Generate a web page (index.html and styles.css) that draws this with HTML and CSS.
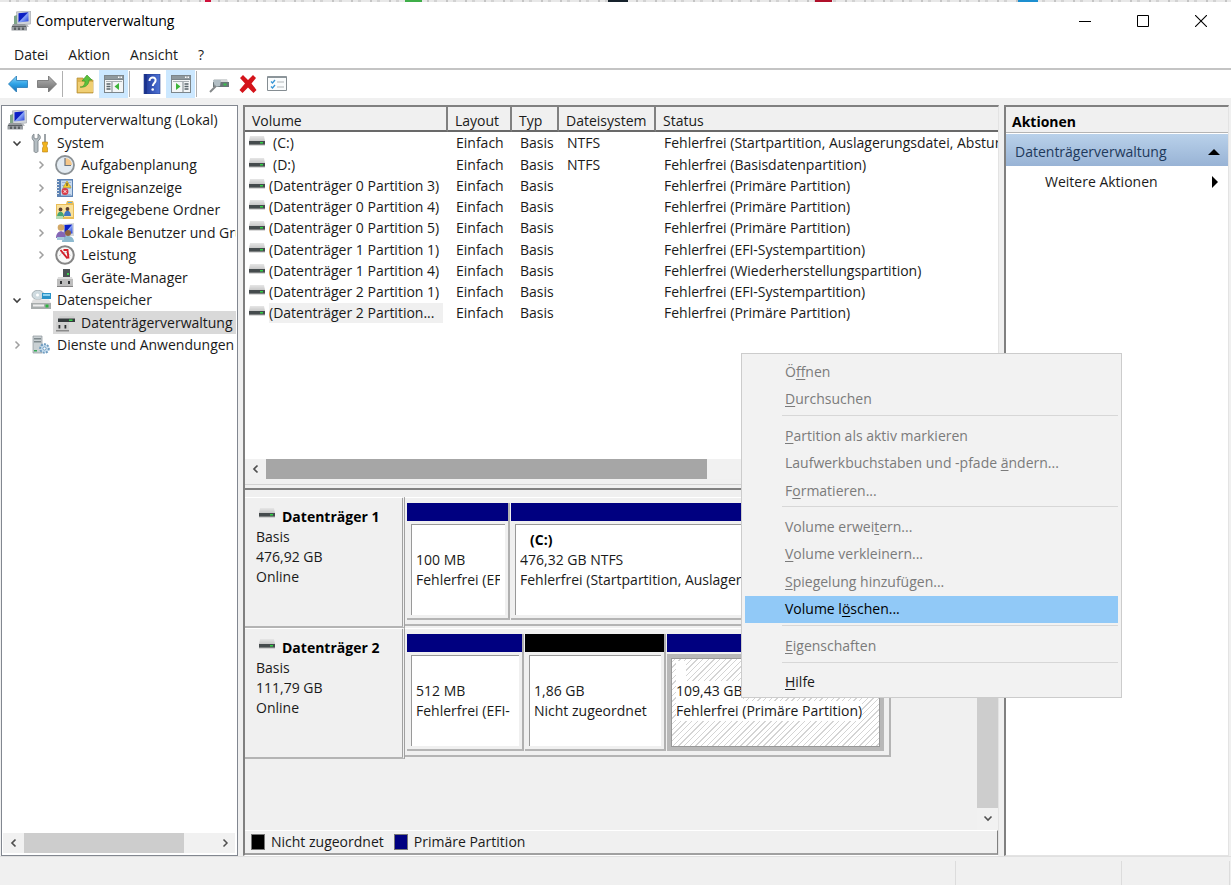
FILE: index.html
```html
<!DOCTYPE html>
<html lang="de">
<head>
<meta charset="utf-8">
<title>Computerverwaltung</title>
<link rel="stylesheet" href="styles.css">
</head>
<body>
<svg class="defs" aria-hidden="true">
  <defs>
    <linearGradient id="gBlue" x1="0" y1="0" x2="1" y2="1"><stop offset="0" stop-color="#0a1fd0"/><stop offset=".45" stop-color="#0d1fc0"/><stop offset=".52" stop-color="#8aa6f8"/><stop offset="1" stop-color="#1b35d8"/></linearGradient>
    <linearGradient id="gArrow" x1="0" y1="0" x2="0" y2="1"><stop offset="0" stop-color="#8fd6f8"/><stop offset=".5" stop-color="#2fa3e6"/><stop offset="1" stop-color="#1470b8"/></linearGradient>
    <linearGradient id="gGrey" x1="0" y1="0" x2="0" y2="1"><stop offset="0" stop-color="#b5b5b5"/><stop offset="1" stop-color="#6c6c6c"/></linearGradient>
    <linearGradient id="gTop" x1="0" y1="0" x2="0" y2="1"><stop offset="0" stop-color="#e6e6e6"/><stop offset="1" stop-color="#c8c8c8"/></linearGradient>
    <linearGradient id="gHelp" x1="0" y1="0" x2="1" y2="0"><stop offset="0" stop-color="#1c3596"/><stop offset="1" stop-color="#4f74d6"/></linearGradient>
  </defs>
  <symbol id="disk" viewBox="0 0 16 10"><path d="M1 0h14l1 5H0z" fill="url(#gTop)"/><path d="M0 5h16v4H0z" fill="#454b4d"/><path d="M0 8.500h16v1H0z" fill="#b5b5b5"/><path d="M11 6h3v1.500h-3z" fill="#2fd044"/></symbol>
  <symbol id="computer" viewBox="0 0 20 20"><path d="M5.500.8L19.500 0v13L6 14z" fill="#d0d4d9" stroke="#9da1a7" stroke-width=".6"/><path d="M7.500 2.200l10-.9v9l-10 1.200z" fill="url(#gBlue)"/><path d="M3 5l3-1v9H3z" fill="#7fa588"/><path d="M9 13h7l2 3H8z" fill="#b9bcc0"/><path d="M2 13h12l2 3v3.500H.5V16z" fill="#989ca0"/><path d="M1 15h14v1H1zM3 16.500h2V19H3zM7 16.500h2V19H7zM11 16.500h2V19h-2z" fill="#5b6064"/></symbol>
  <symbol id="tools" viewBox="0 0 20 20"><path d="M3 1v4l2 1 2-1V1c2 1 3 3 2 5l-2 2v10c0 2-4 2-4 0V8C0 6 1 2 3 1z" fill="#b4bdc2" stroke="#777f84" stroke-width=".8"/><path d="M13 1h2v9h-2z" fill="#9da3a7"/><path d="M11.500 9h5v2l-1 2 1 2v4h-5v-4l1-2-1-2z" fill="#f1b41e" stroke="#bb7d0b" stroke-width=".6"/></symbol>
  <symbol id="clock" viewBox="0 0 20 20"><circle cx="10" cy="10" r="9" fill="#e3ebf2" stroke="#8b9195" stroke-width="1.800"/><path d="M10 10V3a7 7 0 0 1 7 7z" fill="#f5c78a"/><path d="M10 3v7.500h6" fill="none" stroke="#6b7683" stroke-width="1.200"/></symbol>
  <symbol id="events" viewBox="0 0 20 20"><path d="M2 1h16v18H2z" fill="#5d83b4"/><path d="M6 2.500h11v15H6z" fill="#c8daee"/><path d="M7 4h9v1H7zM7 7h9v1H7zM7 10h9v1H7zM7 16h9v1H7z" fill="#9db4d4"/><path d="M1 3h3v1H1zM1 6h3v1H1zM1 9h3v1H1zM1 12h3v1H1zM1 15h3v1H1z" fill="#e4e8ed"/><path d="M12 3l4 6.500H8z" fill="#f6cd2b" stroke="#ad8a10" stroke-width=".5"/><path d="M12 5v3" stroke="#333"/><circle cx="10" cy="13.500" r="3.400" fill="#d93c48"/><path d="M8.700 12.200l2.600 2.600m0-2.600l-2.600 2.600" stroke="#fff"/></symbol>
  <symbol id="shared" viewBox="0 0 20 20"><path d="M1 4h10l1-3h6l1 3v15H1z" fill="#e8bd57"/><path d="M2 5h16v12H2z" fill="#f9e09a"/><path d="M13 2h4v1h-4z" fill="#5ba7dd"/><circle cx="5.500" cy="9.500" r="1.900" fill="#5b4032"/><circle cx="12.500" cy="9" r="1.900" fill="#5b4032"/><path d="M2 17c0-7 7-7 7 0z" fill="#45a473"/><path d="M9 16c0-7 7-7 7 0z" fill="#3e76c4"/><path d="M1 16h7v3H1z" fill="#b6dbb1"/></symbol>
  <symbol id="users" viewBox="0 0 20 20"><path d="M8 1l11-1v13H8z" fill="#d5d8dc"/><path d="M9.500 2l8-.6v9l-8 .6z" fill="url(#gBlue)"/><circle cx="6" cy="4.500" r="3.300" fill="#d2a866"/><path d="M1 15c0-9 10-9 10 0z" fill="#8466b5"/><circle cx="13" cy="10" r="3" fill="#8f633f"/><path d="M7 19c0-8 12-8 12 0z" fill="#8cb9cf"/><path d="M2 14h7v3H2z" fill="#a4c8dc"/></symbol>
  <symbol id="perf" viewBox="0 0 20 20"><circle cx="10" cy="10" r="8.800" fill="#f8f8f8" stroke="#858585" stroke-width="2"/><path d="M4.500 11a6 6 0 0 1 11 0" fill="none" stroke="#999" stroke-width="1" stroke-dasharray="1 1"/><path d="M5.500 5l7 8.500M8.500 5h4l1 8.500" fill="none" stroke="#d3202b" stroke-width="1.900"/></symbol>
  <symbol id="device" viewBox="0 0 20 20"><path d="M8 1h7v9H8z" fill="#4b5154"/><path d="M12 5h2v2h-2z" fill="#3bd04e"/><path d="M3 9h14l1 3H2z" fill="#dcdcdc"/><path d="M2 11h16v8H2z" fill="#bdbdbd"/><path d="M5 13h2v3H5zM13 13h2v3h-2z" fill="#2e3133"/><path d="M2 18h16v1H2z" fill="#858585"/></symbol>
  <symbol id="storage" viewBox="0 0 20 20"><ellipse cx="7" cy="5" rx="6" ry="4.800" fill="#cfdbe0" stroke="#919ca1" stroke-width=".7"/><circle cx="6.500" cy="5" r="1.500" fill="#fff"/><path d="M11 3h9v6h-9z" fill="#2a93c8"/><path d="M12 4h7v2h-7z" fill="#8fd2ee"/><path d="M2 9.500h16l2 4H0z" fill="#e0e0e0"/><path d="M0 13h20v6H0z" fill="#a8adad"/><path d="M2 14.500h11v2H2z" fill="#eee"/><path d="M14.500 14.500h3v3h-3z" fill="#2cb23f"/></symbol>
  <symbol id="diskmgmt" viewBox="0 0 20 20"><path d="M5 3h14l1 3H3z" fill="#cfcfcf"/><path d="M3 5.500h17v3.500H3z" fill="#353b3d"/><path d="M14 6.500h3.500v1.500H14z" fill="#36d44a"/><path d="M1 9h13v9H1z" fill="#cfcfcf"/><path d="M3.500 12h1.800v3.500H3.500zM9.500 12h1.800v3.500H9.500z" fill="#2e3133"/><path d="M1 17h13v1.500H1z" fill="#8b8b8b"/></symbol>
  <symbol id="services" viewBox="0 0 20 20"><path d="M2 1h9v17H2z" fill="#c9d0d3" stroke="#8e979b" stroke-width=".7"/><path d="M3 3h7v1.500H3zM3 6h7v1.500H3z" fill="#7f898d"/><path d="M3 15h3v1.500H3z" fill="#33a953"/><circle cx="13.500" cy="13.500" r="4.300" fill="#cbe0f0" stroke="#6f9cc0" stroke-width="2" stroke-dasharray="2 1.200"/><circle cx="13.500" cy="13.500" r="1.600" fill="#fff" stroke="#6f9cc0"/></symbol>
  <symbol id="left" viewBox="0 0 10 10"><path d="M6.500 1.500L3 5l3.500 3.500" fill="none" stroke="currentColor" stroke-width="1.700"/></symbol>
  <symbol id="right" viewBox="0 0 10 10"><path d="M3.500 1.500L7 5 3.500 8.500" fill="none" stroke="currentColor" stroke-width="1.500"/></symbol>
  <symbol id="down" viewBox="0 0 10 10"><path d="M1.500 3.500L5 7l3.500-3.500" fill="none" stroke="currentColor" stroke-width="1.600"/></symbol>
  <symbol id="panel" viewBox="0 0 20 18"><path d="M0 0h20v18H0z" fill="#7d868b"/><path d="M1 1h18v3H1z" fill="#8f999e"/><path d="M14 1.500h1.500v1.500H14zM16.500 1.500H18v1.500h-1.500z" fill="#fff"/><path d="M1 5h18v12H1z" fill="#f4f6f7"/><path d="M2 6.500h16" stroke="#aab0b4"/></symbol>
</svg>

<div class="backdrop" aria-hidden="true"></div>
<header class="titlebar">
  <svg class="i20"><use href="#computer"/></svg>
  <span class="title">Computerverwaltung</span>
  <button class="win" aria-label="Minimieren"><svg class="i12" viewBox="0 0 12 12"><path d="M0 6.500h12" stroke="#000"/></svg></button>
  <button class="win" aria-label="Maximieren"><svg class="i12" viewBox="0 0 12 12"><path d="M.5.5h11v11H.5z" fill="none" stroke="#000"/></svg></button>
  <button class="win" aria-label="Schließen"><svg class="i12" viewBox="0 0 12 12"><path d="M0 0l12 12M12 0L0 12" stroke="#000" stroke-width="1.100"/></svg></button>
</header>
<nav class="menubar">
  <button>Datei</button><button>Aktion</button><button>Ansicht</button><button>?</button>
</nav>
<div class="toolbar">
  <button aria-label="Zurück"><svg class="i20" viewBox="0 0 20 20"><path d="M.5 10L8.500 2v4.500h11v7h-11V18z" fill="url(#gArrow)" stroke="#2578b5" stroke-width=".8"/></svg></button>
  <button aria-label="Vorwärts"><svg class="i20" viewBox="0 0 20 20"><path d="M19.500 10l-8-8v4.500H.5v7h11V18z" fill="url(#gGrey)" stroke="#6d6d6d" stroke-width=".8"/></svg></button>
  <i class="sep"></i>
  <button aria-label="Nach oben"><svg class="i20" viewBox="0 0 20 20"><path d="M2 4h6l1 2h9v13H2z" fill="#dfb552" stroke="#b28c33" stroke-width=".7"/><path d="M3 8h15v10H3z" fill="#f0cf74"/><path d="M5 13c3 0 5-2 5-6H7l5-6 5 5h-3c0 5-4 8-9 7z" fill="#5cc03c" stroke="#369223" stroke-width=".6"/></svg></button>
  <button class="on" aria-label="Konsolenstruktur"><svg class="i20" viewBox="0 0 20 20"><use href="#panel" y="1" width="20" height="18"/><path d="M8 8v10" stroke="#7d868b"/><path d="M2.500 10h4M2.500 12.500h4M2.500 15h4" stroke="#58646a" stroke-width="1.300"/><path d="M15 9v7l-4.500-3.500z" fill="#3db53a"/></svg></button>
  <i class="sep"></i>
  <button aria-label="Hilfe"><svg class="i20" viewBox="0 0 20 20"><path d="M2 0h16v20H2z" fill="url(#gHelp)" stroke="#243a85" stroke-width=".6"/><path d="M4 0v20" stroke="#152a7c"/><path d="M7.500 7c0-5 7-4.500 6 0-.4 2-2.700 2.500-2.700 5" fill="none" stroke="#fff" stroke-width="2"/><circle cx="10.700" cy="15.500" r="1.300" fill="#fff"/></svg></button>
  <button class="on" aria-label="Aktionsbereich"><svg class="i20" viewBox="0 0 20 20"><use href="#panel" y="1" width="20" height="18"/><path d="M12 8v10" stroke="#7d868b"/><path d="M13.500 10h4M13.500 12.500h4M13.500 15h4" stroke="#58646a" stroke-width="1.300"/><path d="M5 9v7l4.500-3.500z" fill="#3db53a"/></svg></button>
  <i class="sep"></i>
  <button aria-label="Verbinden"><svg class="i20" viewBox="0 0 20 20"><path d="M5 5h13l1 3H4z" fill="#d3d6d7"/><path d="M4 8h16v5H4z" fill="#6a7679"/><path d="M14.500 9.500h3v2h-3z" fill="#37c24a"/><path d="M4 6h8l-1 6-5 1z" fill="#b3bfc5"/><path d="M7 12l-6 6" stroke="#85888a" stroke-width="2"/></svg></button>
  <button aria-label="Löschen"><svg class="i20" viewBox="0 0 20 20"><path d="M2 4l3-3 5 5 5-5 3 3-4.500 5.500L18.500 16l-3 3L10 13.500 4.500 19l-3-3L7 9.500z" fill="#d4141b"/></svg></button>
  <button aria-label="Eigenschaften"><svg class="i20" viewBox="0 0 20 20"><path d="M.5 2.500h19v14H.5z" fill="#fafcfd" stroke="#858d92"/><path d="M1 2h18v2H1z" fill="#8c959a"/><path d="M4 7.500L5.500 9 8 6M4 12.500L5.500 14 8 11" fill="none" stroke="#3695d6" stroke-width="1.300"/><path d="M10 8h7M10 13h7" stroke="#b2b7ba"/></svg></button>
</div>

<main class="workspace">
  <section class="pane tree-pane">
    <ul class="tree" role="tree">
      <li class="l0"><span class="node"><svg class="i20"><use href="#computer"/></svg>Computerverwaltung (Lokal)</span></li>
      <li class="l1"><button class="tog open" aria-label="Einklappen"><svg><use href="#down"/></svg></button><span class="node"><svg class="i20"><use href="#tools"/></svg>System</span></li>
      <li class="l2"><button class="tog" aria-label="Erweitern"><svg><use href="#right"/></svg></button><span class="node"><svg class="i20"><use href="#clock"/></svg>Aufgabenplanung</span></li>
      <li class="l2"><button class="tog" aria-label="Erweitern"><svg><use href="#right"/></svg></button><span class="node"><svg class="i20"><use href="#events"/></svg>Ereignisanzeige</span></li>
      <li class="l2"><button class="tog" aria-label="Erweitern"><svg><use href="#right"/></svg></button><span class="node"><svg class="i20"><use href="#shared"/></svg>Freigegebene Ordner</span></li>
      <li class="l2"><button class="tog" aria-label="Erweitern"><svg><use href="#right"/></svg></button><span class="node"><svg class="i20"><use href="#users"/></svg>Lokale Benutzer und Gruppen</span></li>
      <li class="l2"><button class="tog" aria-label="Erweitern"><svg><use href="#right"/></svg></button><span class="node"><svg class="i20"><use href="#perf"/></svg>Leistung</span></li>
      <li class="l2"><span class="tog"></span><span class="node"><svg class="i20"><use href="#device"/></svg>Geräte-Manager</span></li>
      <li class="l1"><button class="tog open" aria-label="Einklappen"><svg><use href="#down"/></svg></button><span class="node"><svg class="i20"><use href="#storage"/></svg>Datenspeicher</span></li>
      <li class="l2"><span class="tog"></span><span class="node selected"><svg class="i20"><use href="#diskmgmt"/></svg>Datenträgerverwaltung</span></li>
      <li class="l1"><button class="tog" aria-label="Erweitern"><svg><use href="#right"/></svg></button><span class="node"><svg class="i20"><use href="#services"/></svg>Dienste und Anwendungen</span></li>
    </ul>
    <div class="hscroll tree-scroll"><button aria-label="Nach links"><svg><use href="#left"/></svg></button><div class="track"><div class="thumb"></div></div><button aria-label="Nach rechts"><svg><use href="#right"/></svg></button></div>
  </section>

  <section class="center">
    <div class="list">
      <table class="volumes">
        <colgroup><col class="c1"><col class="c2"><col class="c3"><col class="c4"><col></colgroup>
        <thead><tr><th>Volume</th><th>Layout</th><th>Typ</th><th>Dateisystem</th><th>Status</th></tr></thead>
        <tbody>
          <tr><td><svg class="disk"><use href="#disk"/></svg><span class="letter">(C:)</span></td><td>Einfach</td><td>Basis</td><td>NTFS</td><td>Fehlerfrei (Startpartition, Auslagerungsdatei, Absturzabbild)</td></tr>
          <tr><td><svg class="disk"><use href="#disk"/></svg><span class="letter">(D:)</span></td><td>Einfach</td><td>Basis</td><td>NTFS</td><td>Fehlerfrei (Basisdatenpartition)</td></tr>
          <tr><td><svg class="disk"><use href="#disk"/></svg><span>(Datenträger 0 Partition 3)</span></td><td>Einfach</td><td>Basis</td><td></td><td>Fehlerfrei (Primäre Partition)</td></tr>
          <tr><td><svg class="disk"><use href="#disk"/></svg><span>(Datenträger 0 Partition 4)</span></td><td>Einfach</td><td>Basis</td><td></td><td>Fehlerfrei (Primäre Partition)</td></tr>
          <tr><td><svg class="disk"><use href="#disk"/></svg><span>(Datenträger 0 Partition 5)</span></td><td>Einfach</td><td>Basis</td><td></td><td>Fehlerfrei (Primäre Partition)</td></tr>
          <tr><td><svg class="disk"><use href="#disk"/></svg><span>(Datenträger 1 Partition 1)</span></td><td>Einfach</td><td>Basis</td><td></td><td>Fehlerfrei (EFI-Systempartition)</td></tr>
          <tr><td><svg class="disk"><use href="#disk"/></svg><span>(Datenträger 1 Partition 4)</span></td><td>Einfach</td><td>Basis</td><td></td><td>Fehlerfrei (Wiederherstellungspartition)</td></tr>
          <tr><td><svg class="disk"><use href="#disk"/></svg><span>(Datenträger 2 Partition 1)</span></td><td>Einfach</td><td>Basis</td><td></td><td>Fehlerfrei (EFI-Systempartition)</td></tr>
          <tr><td><svg class="disk"><use href="#disk"/></svg><span class="current">(Datenträger 2 Partition...</span></td><td>Einfach</td><td>Basis</td><td></td><td>Fehlerfrei (Primäre Partition)</td></tr>
        </tbody>
      </table>
    </div>
    <div class="hscroll list-scroll"><button aria-label="Nach links"><svg><use href="#left"/></svg></button><div class="track"><div class="thumb"></div></div><button aria-label="Nach rechts"><svg><use href="#right"/></svg></button></div>
    <div class="splitter"></div>
    <div class="graph">
      <div class="disks">
        <div class="diskrow">
          <div class="info"><div class="name"><svg class="disk"><use href="#disk"/></svg>Datenträger 1</div><div>Basis</div><div>476,92 GB</div><div>Online</div></div>
          <div class="parts">
            <div class="part w1"><div class="bar"></div><div class="box"><b></b><span>100 MB</span><span>Fehlerfrei (EFI</span></div></div>
            <div class="part fill"><div class="bar"></div><div class="box"><b>(C:)</b><span>476,32 GB NTFS</span><span>Fehlerfrei (Startpartition, Auslagerungsdatei)</span></div></div>
          </div>
        </div>
        <div class="diskrow">
          <div class="info"><div class="name"><svg class="disk"><use href="#disk"/></svg>Datenträger 2</div><div>Basis</div><div>111,79 GB</div><div>Online</div></div>
          <div class="parts fit">
            <div class="part w2"><div class="bar"></div><div class="box"><b></b><span>512 MB</span><span>Fehlerfrei (EFI-</span></div></div>
            <div class="part w3"><div class="bar free"></div><div class="box"><b></b><span>1,86 GB</span><span>Nicht zugeordnet</span></div></div>
            <div class="part w4 active"><div class="bar"></div><div class="box"><b></b><span>109,43 GB</span><span>Fehlerfrei (Primäre Partition)</span></div></div>
          </div>
        </div>
      </div>
      <div class="vscroll"><div class="vthumb"></div><button aria-label="Nach unten"><svg><use href="#down"/></svg></button></div>
    </div>
    <div class="legend"><i class="swatch free"></i>Nicht zugeordnet<i class="swatch"></i>Primäre Partition</div>
  </section>

  <aside class="actions">
    <h2>Aktionen</h2>
    <button class="group">Datenträgerverwaltung<svg class="i12" viewBox="0 0 12 12"><path d="M0 9l6-6 6 6z"/></svg></button>
    <button class="more">Weitere Aktionen<svg class="i12" viewBox="0 0 12 12"><path d="M3 0l6 6-6 6z"/></svg></button>
  </aside>
</main>
<footer class="status"><span></span><span></span><span></span></footer>

<div class="context" role="menu">
  <button disabled>Ö<u>f</u>fnen</button>
  <button disabled><u>D</u>urchsuchen</button>
  <hr>
  <button disabled><u>P</u>artition als aktiv markieren</button>
  <button disabled>Laufwerkbuchstaben und -pfade <u>ä</u>ndern...</button>
  <button disabled>F<u>o</u>rmatieren...</button>
  <hr>
  <button disabled>Volume erwei<u>t</u>ern...</button>
  <button disabled><u>V</u>olume verkleinern...</button>
  <button disabled><u>S</u>piegelung hinzufügen...</button>
  <button class="hover">Volume l<u>ö</u>schen...</button>
  <hr>
  <button disabled><u>E</u>igenschaften</button>
  <hr>
  <button><u>H</u>ilfe</button>
</div>
</body>
</html>
```
FILE: styles.css
```css
* { box-sizing: border-box; }
body {
  margin: 0;
  height: 100vh;
  display: flex;
  flex-direction: column;
  overflow: hidden;
  background: #f0f0f0;
  color: #1a1a1a;
  font: 14px/20px "Open Sans", "Noto Sans", sans-serif;
  white-space: nowrap;
}
button { border: 0; padding: 0; background: none; color: inherit; font: inherit; }
svg { display: block; flex: none; }
.defs { position: absolute; width: 0; height: 0; }
.i20 { width: 20px; height: 20px; }
.i12 { width: 12px; height: 12px; }
.disk { width: 16px; height: 10px; }

.backdrop {
  height: 2px;
  flex: none;
  background:
    linear-gradient(90deg, transparent 205px, #d0103a 205px 211px, transparent 211px 405px, #3fae49 405px 422px, transparent 422px 608px, #16222c 608px 628px, transparent 628px 815px, #b0102a 815px 832px, transparent 832px 1018px, #1d8fd0 1018px 1038px, transparent 1038px),
    repeating-linear-gradient(90deg, #e8e8e8 0 9px, #c4c4c4 9px 11px, #e8e8e8 11px 16px, #d2d2d2 16px 19px);
}
.titlebar { height: 38px; flex: none; display: flex; align-items: center; padding: 0 1px 0 11px; background: #fff; color: #000; }
.title { flex: 1; margin-left: 5px; }
.win { width: 58px; height: 38px; display: flex; align-items: center; justify-content: center; }
.menubar { height: 28px; flex: none; display: flex; align-items: center; gap: 20px; padding: 2px 14px 0; background: #fff; }
.toolbar { height: 30px; flex: none; display: flex; align-items: center; padding-left: 3px; background: #fff; border-top: 2px solid #c4c4c4; }
.toolbar button { width: 29px; height: 28px; display: flex; align-items: center; justify-content: center; }
.toolbar .on { background: #cce8ff; }
.sep { width: 1px; height: 26px; margin: 0 7px 0 1px; background: #b0b0b0; }

.workspace { flex: 1; min-height: 0; display: flex; gap: 5px; padding: 7px 2px 0 1px; }
.tree-pane { width: 237px; flex: none; display: flex; flex-direction: column; background: #fff; border: 1px solid #828790; }
.tree { flex: 1; margin: 0; padding: 3px 1px 0 3px; list-style: none; overflow: hidden; }
.tree li { height: 22px; display: flex; align-items: center; gap: 4px; }
.tree li:nth-child(even) { height: 23px; }
.l1 { padding-left: 4px; }
.l2 { padding-left: 28px; }
.tog { width: 16px; height: 16px; flex: none; display: flex; align-items: center; justify-content: center; color: #a0a0a0; }
.tog.open { color: #404040; }
.tog svg { width: 10px; height: 10px; }
.node { display: flex; align-items: center; gap: 6px; height: 100%; padding-left: 2px; flex: 1; min-width: 0; overflow: hidden; }
.selected { background: #d9d9d9; }

.hscroll { height: 20px; flex: none; display: flex; background: #f1f1f1; color: #505050; }
.hscroll button { width: 21px; height: 20px; display: flex; align-items: center; justify-content: center; }
.hscroll svg, .vscroll svg { width: 10px; height: 10px; }
.track { flex: 1; }
.thumb { height: 100%; background: #cdcdcd; }
.tree-scroll { margin: 0 2px 2px 1px; }
.tree-scroll .thumb { width: 84%; }
.list-scroll .thumb { width: 62%; background: #a6a6a6; }

.center { flex: 1; min-width: 0; display: flex; flex-direction: column; border: 2px solid #808080; border-right: 1px solid #e3e3e3; border-bottom: 1px solid #fff; }
.list { height: 352px; flex: none; overflow: hidden; background: #fff; }
.volumes { width: 100%; table-layout: fixed; border-collapse: separate; border-spacing: 0; }
.c1 { width: 203px; }
.c2 { width: 64px; }
.c3 { width: 47px; }
.c4 { width: 97px; }
.volumes th { height: 25px; padding: 3px 0 0 7px; line-height: 19px; text-align: left; font-weight: 400; background: #f0f0f0; border-right: 2px solid #808080; border-bottom: 2px solid #696969; }
.volumes th:last-child { border-right: 0; }
.volumes td { height: 21px; padding: 0 0 0 8px; overflow: hidden; }
.volumes tr:nth-child(4n+1) td { height: 22px; }
.volumes td:first-child { display: flex; align-items: center; gap: 4px; padding-left: 4px; }
.volumes .disk { margin-bottom: 4px; }
.letter { margin-left: 4px; }
.current { background: #f0f0f0; flex: 1; margin-right: 5px; }
.splitter { height: 11px; flex: none; border-bottom: 2px solid #808080; background: linear-gradient(#f0f0f0 0 5px, #d2d2d2 5px 6px, #f0f0f0 6px); }

.graph { flex: 1; min-height: 0; display: flex; }
.disks { flex: 1; min-width: 0; padding-top: 7px; }
.diskrow { height: 131px; display: flex; }
.info { width: 160px; flex: none; padding: 9px 0 0 11px; border-top: 1px solid #fff; border-right: 3px double #a0a0a0; border-bottom: 2px solid #b4b4b4; }
.name { display: flex; gap: 7px; padding-left: 3px; font-weight: 700; color: #000; }
.name .disk { margin-top: 1px; }
.parts { flex: 1; min-width: 0; height: 129px; display: flex; padding: 5px 5px 4px 2px; border-top: 1px solid #fff; border-bottom: 2px solid #b4b4b4; }
.fit { flex: none; border-right: 2px solid #b4b4b4; }
.part { flex: none; display: flex; flex-direction: column; border-right: 2px solid #b0b0b0; border-bottom: 2px solid #b4b4b4; margin-right: 1px; }
.w1 { width: 103px; }
.w2 { width: 117px; }
.w3 { width: 141px; }
.w4 { width: 217px; }
.part.fill { flex: 1; min-width: 0; }
.bar { height: 18px; background: #000080; }
.free { background: #000; }
.box { flex: 1; display: flex; flex-direction: column; align-items: flex-start; overflow: hidden; margin: 3px 3px 3px 4px; padding: 5px 5px 0 4px; background: #fff; border-left: 1px solid #999; border-top: 1px solid #999; }
.box b { height: 20px; padding-left: 10px; color: #000; }
.box span { max-width: 100%; overflow: hidden; }
.active { border: 0; margin: 0; }
.active .bar { margin-bottom: 2px; }
.active .box { margin: 0; border: 4px solid #b8b8b8; outline: 1px solid #989898; outline-offset: -5px; padding: 3px 5px 0; background: repeating-linear-gradient(135deg, #fff 0 3px, #d4d4d4 3px 4px); }
.active .box span, .active .box b { background: #fff; }

.vscroll { width: 21px; flex: none; display: flex; flex-direction: column; background: #f1f1f1; color: #505050; }
.vscroll button { height: 22px; padding-bottom: 2px; display: flex; align-items: center; justify-content: center; }
.vthumb { flex: 1; background: #cdcdcd; }
.legend { height: 25px; flex: none; display: flex; align-items: center; padding: 0 6px; border-top: 1px solid #fff; border-right: 1px solid #808080; border-bottom: 2px solid #a0a0a0; }
.swatch { width: 14px; height: 16px; margin-right: 6px; background: #000080; border: 1px solid #777; }
.swatch.free { background: #000; }
.swatch:not(.free) { margin-left: 10px; }

.actions { width: 225px; flex: none; background: #fff; border: 2px solid #808080; border-right: 1px solid #e3e3e3; border-bottom: 1px solid #e3e3e3; }
.actions h2 { margin: 0; height: 26px; padding: 5px 6px 0; font-size: 14px; line-height: 20px; color: #000; background: #f0f0f0; border-bottom: 1px solid #b4b4b4; }
.group, .more { width: 100%; height: 32px; display: flex; align-items: center; justify-content: space-between; }
.group { margin-top: 1px; padding: 4px 8px 0 9px; background: linear-gradient(#b9d1ea, #98b3d5); color: #1e395b; }
.more { padding: 0 7px 0 39px; }

.status { height: 29px; flex: none; display: flex; justify-content: flex-end; padding: 4px 1px 0 0; border-top: 1px solid #e0e0e0; }
.status span { border-right: 1px solid #dcdcdc; width: 108px; }
.status span:nth-child(1) { flex: 1; }
.status span:nth-child(2) { width: 166px; }

.context { position: absolute; left: 741px; top: 353px; width: 381px; height: 345px; display: flex; flex-direction: column; padding: 4px 3px 1px; background: #f2f2f2; border: 1px solid #ccc; }
.context button { flex: 1; padding-left: 40px; text-align: left; color: #1a1a1a; }
.context button:disabled { color: #7b7b7b; }
.context .hover { background: #91c9f7; color: #000; }
.context hr { width: calc(100% - 37px); height: 1px; margin: 2px 0 6px 37px; border: 0; background: #d7d7d7; }
.context u { text-underline-offset: 2px; }
```
